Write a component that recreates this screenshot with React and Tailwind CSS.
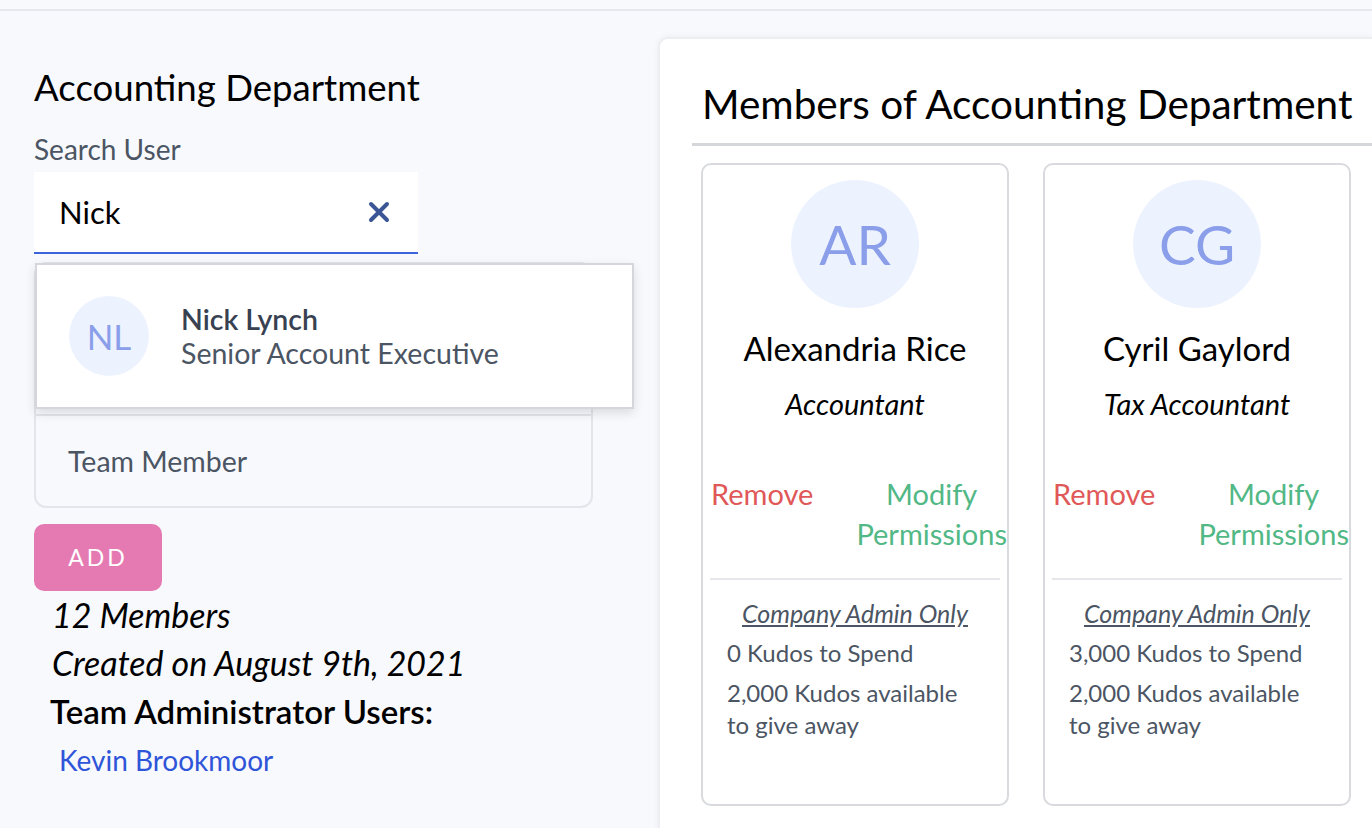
import React from 'react';

const font = { fontFamily: 'Lato, "Noto Sans", sans-serif' };

const members = [
  { initials: 'AR', name: 'Alexandria Rice', role: 'Accountant', spend: '0', give: '2,000' },
  { initials: 'CG', name: 'Cyril Gaylord', role: 'Tax Accountant', spend: '3,000', give: '2,000' },
];

const MemberCard = ({ member }) => (
  <div className="w-[308px] h-[643px] shrink-0 rounded-[10px] border-2 border-[#d8dade] bg-white overflow-hidden">
    <div className="flex justify-center pt-[15px]">
      <div className="flex h-[128px] w-[128px] items-center justify-center rounded-full bg-[#edf3fe] text-[55px] text-[#8a9eea]">
        {member.initials}
      </div>
    </div>
    <div className="mt-[20px] text-center text-[33px] leading-[40px] text-black">{member.name}</div>
    <div className="mt-[18px] text-center text-[29px] leading-[36px] italic text-black">{member.role}</div>
    <div className="mt-[52px] flex pl-[8px]">
      <div className="w-[152px] text-[29px] leading-[40px] text-[#e05858]">Remove</div>
      <div className="flex-1 whitespace-nowrap text-center text-[29px] leading-[40px] text-[#52b886]">
        Modify<br />Permissions
      </div>
    </div>
    <div className="mx-[7px] mt-[24px] h-[2px] bg-[#e5e7eb]" />
    <div className="mt-[19px] text-center text-[25px] leading-[28px] italic underline text-[#4b5563]">
      Company Admin Only
    </div>
    <div className="mt-[12px] px-[24px] text-[24px] leading-[28px] text-[#4b5563]">
      {member.spend} Kudos to Spend
    </div>
    <div className="mt-[10px] px-[24px] text-[24px] leading-[32px] text-[#4b5563]">
      {member.give} Kudos available<br />to give away
    </div>
  </div>
);

export default function App() {
  return (
    <div className="h-[828px] w-full overflow-hidden bg-[#f8f9fd]" style={font}>
      <div className="h-[11px] border-b-2 border-[#e6e8ee]" />
      <div className="flex">
        {/* left column */}
        <div className="w-[658px] shrink-0 pl-[34px] pt-[55px]">
          <h1 className="text-[36.6px] leading-[42px] text-black">Accounting Department</h1>
          <div className="mt-[26px] text-[28px] leading-[30px] text-[#4b5563]">Search User</div>
          <div className="relative mt-[8px]">
            <div className="flex h-[82px] w-[384px] items-center border-b-2 border-[#3b63db] bg-white pl-[25px] pr-[28px]">
              <span className="flex-1 text-[31px] text-black">Nick</span>
              <svg width="22" height="22" viewBox="0 0 22 22">
                <path d="M3 3 L19 19 M19 3 L3 19" stroke="#3a5694" strokeWidth="4" strokeLinecap="round" />
              </svg>
            </div>

            {/* role list behind the dropdown */}
            <div className="mt-[8px] w-[559px] rounded-[12px] border-2 border-[#e3e5ea]">
              <div className="h-[152px] border-b-2 border-[#e3e5ea]" />
              <div className="flex h-[90px] items-center pl-[32px] text-[28.5px] text-[#4b5563]">Team Member</div>
            </div>

            {/* search results dropdown */}
            <div className="absolute left-[1px] top-[91px] flex h-[146px] w-[599px] items-center border-2 border-[#d4d6db] bg-white pl-[32px] shadow-[0_4px_10px_rgba(0,0,0,0.12)]">
              <div className="flex h-[80px] w-[80px] items-center justify-center rounded-full bg-[#edf3fe] text-[35px] text-[#8a9eea]">
                NL
              </div>
              <div className="ml-[32px]">
                <div className="text-[28.5px] leading-[34px] font-semibold text-[#374151]">Nick Lynch</div>
                <div className="text-[28.5px] leading-[34px] text-[#4b5563]">Senior Account Executive</div>
              </div>
            </div>
          </div>

          <button className="mt-[16px] h-[67px] w-[128px] rounded-[10px] bg-[#e57ab3] text-[23px] tracking-[3px] text-white">
            ADD
          </button>
          <div className="pl-[18px]">
            <div className="text-[34px] leading-[48px] italic text-black">12 Members</div>
            <div className="text-[34px] leading-[48px] italic text-black">Created on August 9th, 2021</div>
          </div>
          <div className="pl-[16px] text-[33px] leading-[48px] font-semibold text-black">Team Administrator Users:</div>
          <div className="mt-[1px] pl-[25px] text-[28px] leading-[48px] text-[#2f55d8]">Kevin Brookmoor</div>
        </div>

        {/* right panel */}
        <div className="mt-[26px] h-[800px] flex-1 rounded-tl-[10px] border-l-2 border-t-2 border-[#eceef2] bg-white pl-[32px] pt-[42px] shadow-[0_0_6px_rgba(0,0,0,0.06)]">
          <h2 className="whitespace-nowrap pl-[10px] text-[40.5px] leading-[46px] text-black">Members of Accounting Department</h2>
          <div className="mt-[16px] h-[3px] bg-[#d4d6da]" />
          <div className="mt-[17px] flex gap-[34px] pl-[9px]">
            {members.map((m) => (
              <MemberCard key={m.initials} member={m} />
            ))}
          </div>
        </div>
      </div>
    </div>
  );
}
